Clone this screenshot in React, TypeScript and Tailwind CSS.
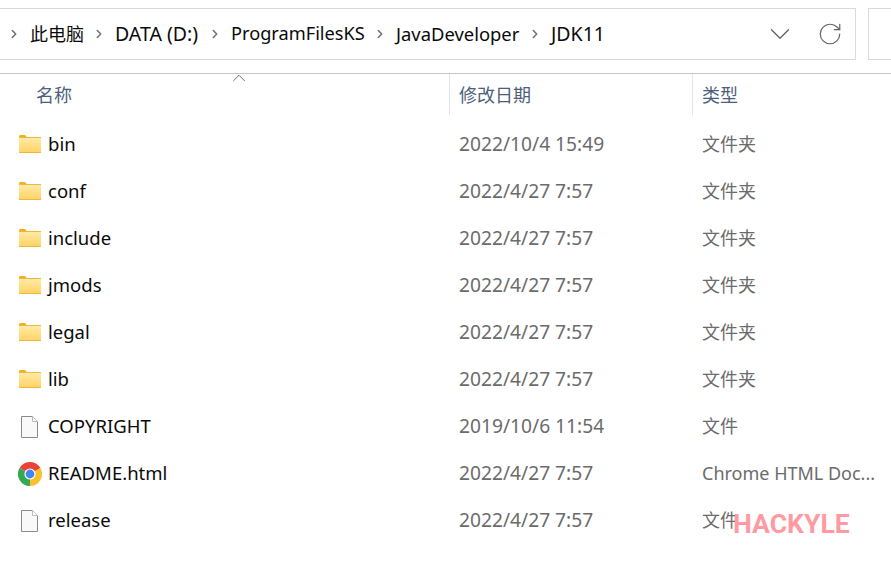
import { ChevronDown, ChevronRight, ChevronUp, RotateCw } from "lucide-react";

type Kind = "folder" | "file" | "chrome";

type Row = {
  name: string;
  date: string;
  type: string;
  kind: Kind;
};

const rows: Row[] = [
  { name: "bin", date: "2022/10/4 15:49", type: "文件夹", kind: "folder" },
  { name: "conf", date: "2022/4/27 7:57", type: "文件夹", kind: "folder" },
  { name: "include", date: "2022/4/27 7:57", type: "文件夹", kind: "folder" },
  { name: "jmods", date: "2022/4/27 7:57", type: "文件夹", kind: "folder" },
  { name: "legal", date: "2022/4/27 7:57", type: "文件夹", kind: "folder" },
  { name: "lib", date: "2022/4/27 7:57", type: "文件夹", kind: "folder" },
  { name: "COPYRIGHT", date: "2019/10/6 11:54", type: "文件", kind: "file" },
  { name: "README.html", date: "2022/4/27 7:57", type: "Chrome HTML Doc...", kind: "chrome" },
  { name: "release", date: "2022/4/27 7:57", type: "文件", kind: "file" },
];

const crumbs = [
  { label: "此电脑", width: "w-[54px]", size: "text-[18px]" },
  { label: "DATA (D:)", width: "w-[85px]", size: "text-[19.5px]" },
  { label: "ProgramFilesKS", width: "w-[134px]", size: "text-[18.2px]" },
  { label: "JavaDeveloper", width: "w-[124px]", size: "text-[18.4px]" },
  { label: "JDK11", width: "w-[54px]", size: "text-[19.5px]" },
];

function FolderIcon() {
  return (
    <svg width="22" height="18" viewBox="0 0 22 18" className="mt-[-2px]">
      <defs>
        <linearGradient id="folder-body" x1="0" y1="0" x2="0" y2="1">
          <stop offset="0" stopColor="#ffeaa6" />
          <stop offset="1" stopColor="#ffd466" />
        </linearGradient>
      </defs>
      <path d="M0 1.5C0 .7.6 0 1.4 0H6l2.5 3H0z" fill="#f2b01e" />
      <rect x="0" y="2" width="22" height="16" fill="#eeb840" />
      <rect x="0" y="3" width="22" height="14" fill="url(#folder-body)" />
    </svg>
  );
}

function FileIcon() {
  return (
    <svg width="24" height="24" viewBox="0 0 24 24">
      <path d="M3.5 1.5h11l5 5v16h-16z" fill="#f9f9f9" stroke="#8a8a8a" />
      <path d="M14.5 1.5v5h5" fill="#ffffff" stroke="#bdbdbd" />
    </svg>
  );
}

function ChromeIcon() {
  return (
    <svg width="24" height="24" viewBox="0 0 24 24">
      <path d="M12 12L1.6 6A12 12 0 0 1 22.4 6z" fill="#ea4335" />
      <path d="M12 12L22.4 6A12 12 0 0 1 12 24z" fill="#fbc02d" />
      <path d="M12 12L12 24A12 12 0 0 1 1.6 6z" fill="#34a853" />
      <circle cx="12" cy="12" r="5.6" fill="#ffffff" />
      <circle cx="12" cy="12" r="4.4" fill="#4285f4" />
    </svg>
  );
}

function RowIcon({ kind }: { kind: Kind }) {
  if (kind === "folder") return <FolderIcon />;
  if (kind === "chrome") return <ChromeIcon />;
  return <FileIcon />;
}

export default function App() {
  return (
    <div
      className="relative h-[573px] w-[891px] overflow-hidden bg-white text-[18.5px] text-[#0a0a0a]"
      style={{ fontFamily: '"Noto Sans", "Noto Sans CJK SC", sans-serif' }}
    >
      {/* address bar */}
      <div className="flex h-[74px] items-start gap-[12px] border-b border-[#c6c6c6] pt-2">
        <div className="ml-[-1px] flex h-[52px] w-[857px] shrink-0 items-center border border-[#d9d9d9] pl-[7px] pr-[12px]">
          <div className="flex flex-1 items-center">
            {crumbs.map((crumb) => (
              <div key={crumb.label} className="flex items-center">
                <ChevronRight size={14} strokeWidth={2.5} className="mr-[9px] text-[#6e6e6e]" />
                <span className={`mr-[8px] whitespace-nowrap ${crumb.width} ${crumb.size}`}>{crumb.label}</span>
              </div>
            ))}
          </div>
          <ChevronDown size={34} strokeWidth={0.9} className="mr-[20px] text-[#606060]" />
          <RotateCw size={26} strokeWidth={1.1} className="text-[#606060]" />
        </div>
        <div className="h-[52px] w-[40px] shrink-0 border border-[#d9d9d9]" />
      </div>

      {/* column header */}
      <div className="relative flex h-[41px] items-center text-[18px] text-[#4c607a]">
        <ChevronUp size={22} strokeWidth={1} className="absolute left-[228px] top-[-7px] text-[#606060]" />
        <div className="w-[449px] pl-[36px] pt-[2px]">名称</div>
        <div className="h-full w-[243px] border-l border-[#e5e5e5] pl-[9px] leading-[43px]">修改日期</div>
        <div className="h-full flex-1 border-l border-[#e5e5e5] pl-[9px] leading-[43px]">类型</div>
      </div>

      {/* file rows */}
      <div className="mt-[6px] flex flex-col">
        {rows.map((row) => (
          <div key={row.name} className="flex h-[47px] items-center">
            <div className="flex w-[449px] items-center">
              <div className="ml-[18px] mr-[6px] flex w-[24px] justify-center">
                <RowIcon kind={row.kind} />
              </div>
              <span className="pb-[2px]">{row.name}</span>
            </div>
            <div className="w-[243px] pl-[10px] text-[19.2px] text-[#6b6b6b]">{row.date}</div>
            <div className="flex-1 whitespace-nowrap pl-[10px] text-[18px] text-[#6b6b6b]">{row.type}</div>
          </div>
        ))}
      </div>

      {/* watermark */}
      <div
        className="absolute left-[733px] top-[507px] text-[26.6px] font-bold leading-[34px] text-[#ff9aa2]"
        style={{ fontFamily: "Roboto, sans-serif" }}
      >
        HACKYLE
      </div>
    </div>
  );
}
